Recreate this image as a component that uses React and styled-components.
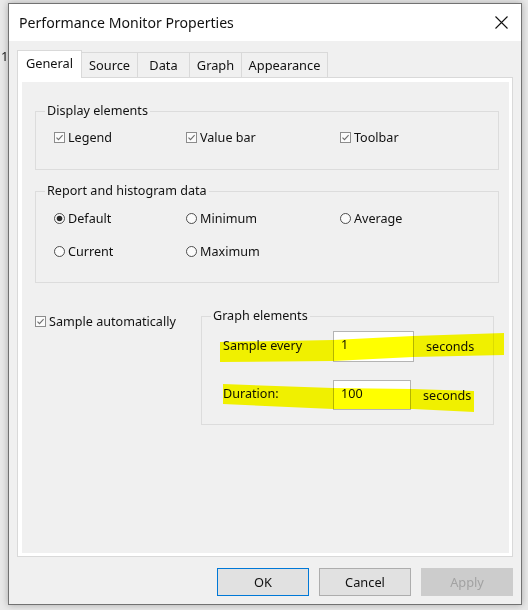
import React from 'react'
import styled, { createGlobalStyle } from 'styled-components'

const GlobalStyle = createGlobalStyle`
    html, body {
        margin: 0;
        padding: 0;
        background: #e9e9e9;
        font-family: "Noto Sans", "Open Sans", sans-serif;
        color: #111;
    }
`

export default function App() {
    return (
        <>
            <GlobalStyle />
            <Screen>
                <Gutter>1</Gutter>
                <Dialog>
                    <TitleBar>
                        <Title>Performance Monitor Properties</Title>
                        <CloseButton aria-label="Close">
                            <svg width="13" height="13" viewBox="0 0 13 13">
                                <path d="M0.5 0.5 L12.5 12.5 M12.5 0.5 L0.5 12.5" stroke="#111" strokeWidth="1.1" />
                            </svg>
                        </CloseButton>
                    </TitleBar>

                    <DialogBody>
                        <TabRow>
                            <Tab $w={65} $active>General</Tab>
                            <Tab $w={56}>Source</Tab>
                            <Tab $w={52}>Data</Tab>
                            <Tab $w={52}>Graph</Tab>
                            <Tab $w={86}>Appearance</Tab>
                        </TabRow>

                        <Panel>
                            <PanelInner>
                                <Group>
                                    <Legend>Display elements</Legend>
                                    <OptionGrid>
                                        <Option><CheckBox checked />Legend</Option>
                                        <Option><CheckBox checked />Value bar</Option>
                                        <Option><CheckBox checked />Toolbar</Option>
                                    </OptionGrid>
                                </Group>

                                <Group $mt={12} $pb={22}>
                                    <Legend>Report and histogram data</Legend>
                                    <OptionGrid $pt={9}>
                                        <Option><Radio checked />Default</Option>
                                        <Option><Radio />Minimum</Option>
                                        <Option><Radio />Average</Option>
                                        <Option><Radio />Current</Option>
                                        <Option><Radio />Maximum</Option>
                                    </OptionGrid>
                                </Group>

                                <BottomSection>
                                    <SampleAuto><CheckBox checked />Sample automatically</SampleAuto>
                                    <GraphGroup>
                                        <Legend>Graph elements</Legend>
                                        <Highlight width="320" height="100" viewBox="0 0 320 100">
                                            <polygon points="18,26 131,24 211,20 302,17 302,39 211,41 131,45 18,46" />
                                            <polygon points="21,68 131,72 211,73 272,75 272,96 211,93 131,93 21,88" />
                                        </Highlight>
                                        <FieldList>
                                            <FieldRow>
                                                <FieldLabel>Sample every</FieldLabel>
                                                <Field $w={81} $h={31}>1</Field>
                                                <Unit>seconds</Unit>
                                            </FieldRow>
                                            <FieldRow $mt={18}>
                                                <FieldLabel>Duration:</FieldLabel>
                                                <Field $w={78} $h={30}>100</Field>
                                                <Unit>seconds</Unit>
                                            </FieldRow>
                                        </FieldList>
                                    </GraphGroup>
                                </BottomSection>
                            </PanelInner>
                        </Panel>

                        <ButtonRow>
                            <Button $primary>OK</Button>
                            <Button>Cancel</Button>
                            <Button disabled>Apply</Button>
                        </ButtonRow>
                    </DialogBody>
                </Dialog>
            </Screen>
        </>
    )
}

function CheckBox({ checked }) {
    return (
        <Box width="11" height="11" viewBox="0 0 11 11">
            <rect x="0.5" y="0.5" width="10" height="10" fill="#fbfbfb" stroke="#8c8c8c" />
            {checked && <path d="M2.5 5.6 L4.5 7.6 L8.6 3.2" fill="none" stroke="#6d6d6d" strokeWidth="1.1" />}
        </Box>
    )
}

function Radio({ checked }) {
    return (
        <Box width="11" height="11" viewBox="0 0 11 11">
            <circle cx="5.5" cy="5.5" r="5" fill="#fbfbfb" stroke="#3c3c3c" strokeWidth="0.9" />
            {checked && <circle cx="5.5" cy="5.5" r="2.8" fill="#2a2a2a" />}
        </Box>
    )
}

const Screen = styled.div`
    display: flex;
    align-items: flex-start;
    width: 528px;
    height: 610px;
    padding-top: 3px;
    box-sizing: border-box;
    overflow: hidden;
`

const Gutter = styled.div`
    width: 8px;
    flex: none;
    padding-top: 45px;
    font-size: 13px;
    line-height: 16px;
    color: #222;
    padding-left: 1px;
    box-sizing: border-box;
`

const Dialog = styled.div`
    width: 514px;
    height: 602px;
    flex: none;
    box-sizing: border-box;
    border: 1px solid #727272;
    background: #f0f0f0;
    display: flex;
    flex-direction: column;
    box-shadow: 0 0 7px rgba(0, 0, 0, 0.28);
`

const TitleBar = styled.div`
    height: 37px;
    flex: none;
    background: #ffffff;
    display: flex;
    align-items: center;
    justify-content: space-between;
    padding: 0 13px 0 10px;
`

const Title = styled.div`
    font-size: 14.1px;
    color: #111;
`

const CloseButton = styled.div`
    width: 13px;
    height: 13px;
    display: flex;
`

const DialogBody = styled.div`
    flex: 1;
    display: flex;
    flex-direction: column;
    padding: 9px 8px 0 8px;
`

const TabRow = styled.div`
    display: flex;
    align-items: flex-end;
    height: 27px;
`

const Tab = styled.div`
    width: ${p => p.$w}px;
    height: ${p => (p.$active ? 28 : 25)}px;
    box-sizing: border-box;
    display: flex;
    align-items: center;
    justify-content: center;
    font-size: 12.8px;
    border: 1px solid #d9d9d9;
    border-bottom: none;
    border-left: ${p => (p.$active ? '1px solid #d9d9d9' : 'none')};
    background: ${p => (p.$active ? '#ffffff' : '#f0f0f0')};
    margin-bottom: ${p => (p.$active ? '-1px' : '0')};
    padding-bottom: ${p => (p.$active ? '4px' : '0')};
    position: relative;
    z-index: ${p => (p.$active ? 1 : 0)};
    &:first-child {
        border-left: 1px solid #d9d9d9;
    }
`

const Panel = styled.div`
    width: 496px;
    height: 480px;
    box-sizing: border-box;
    border: 1px solid #d9d9d9;
    background: #ffffff;
    padding: 4px 3px 3px 4px;
`

const PanelInner = styled.div`
    height: 100%;
    background: #f0f0f0;
    padding: 20px 10px 0 13px;
    box-sizing: border-box;
    font-size: 12.6px;
`

const Group = styled.fieldset`
    margin: ${p => p.$mt || 0}px 0 0 0;
    padding: 0 0 ${p => p.$pb || 23}px 0;
    border: 1px solid #dcdcdc;
    min-width: 0;
`

const Legend = styled.legend`
    margin-left: 9px;
    padding: 0 2px;
    height: 18px;
    line-height: 18px;
    font-size: 12.6px;
    color: #111;
`

const OptionGrid = styled.div`
    display: grid;
    grid-template-columns: 132px 154px auto;
    row-gap: 15px;
    padding: ${p => p.$pt || 8}px 0 0 18px;
`

const Option = styled.label`
    display: flex;
    align-items: center;
    gap: 3px;
    height: 18px;
    white-space: nowrap;
`

const Box = styled.svg`
    flex: none;
    display: block;
`

const BottomSection = styled.div`
    display: flex;
    align-items: flex-start;
    margin-top: 24px;
`

const SampleAuto = styled(Option)`
    width: 166px;
    margin-top: 5px;
`

const GraphGroup = styled.fieldset`
    position: relative;
    width: 293px;
    box-sizing: border-box;
    margin: 0;
    padding: 6px 0 14px 0;
    border: 1px solid #dcdcdc;
    min-width: 0;
`

const Highlight = styled.svg`
    position: absolute;
    left: 0;
    top: -9px;
    mix-blend-mode: multiply;
    pointer-events: none;
    z-index: 2;
    overflow: visible;
    fill: #ffff00;
`

const FieldList = styled.div`
    padding-left: 21px;
`

const FieldRow = styled.div`
    display: flex;
    align-items: center;
    margin-top: ${p => p.$mt || 0}px;
`

const FieldLabel = styled.div`
    width: 110px;
    flex: none;
    padding-bottom: 3px;
`

const Field = styled.div`
    width: ${p => p.$w}px;
    height: ${p => p.$h}px;
    box-sizing: border-box;
    border: 1px solid #b4b4b4;
    background: #ffffff;
    display: flex;
    align-items: center;
    padding: 0 0 4px 7px;
    flex: none;
`

const Unit = styled.div`
    margin-left: 12px;
`

const ButtonRow = styled.div`
    display: flex;
    justify-content: flex-end;
    gap: 10px;
    margin-top: 11px;
`

const Button = styled.div`
    width: 92px;
    height: 28px;
    box-sizing: border-box;
    display: flex;
    align-items: center;
    justify-content: center;
    font-size: 12.8px;
    background: ${p => (p.disabled ? '#cccccc' : '#e1e1e1')};
    color: ${p => (p.disabled ? '#a2a2a2' : '#111')};
    border: 1px solid ${p => (p.$primary ? '#0078d7' : p.disabled ? '#cccccc' : '#adadad')};
`
